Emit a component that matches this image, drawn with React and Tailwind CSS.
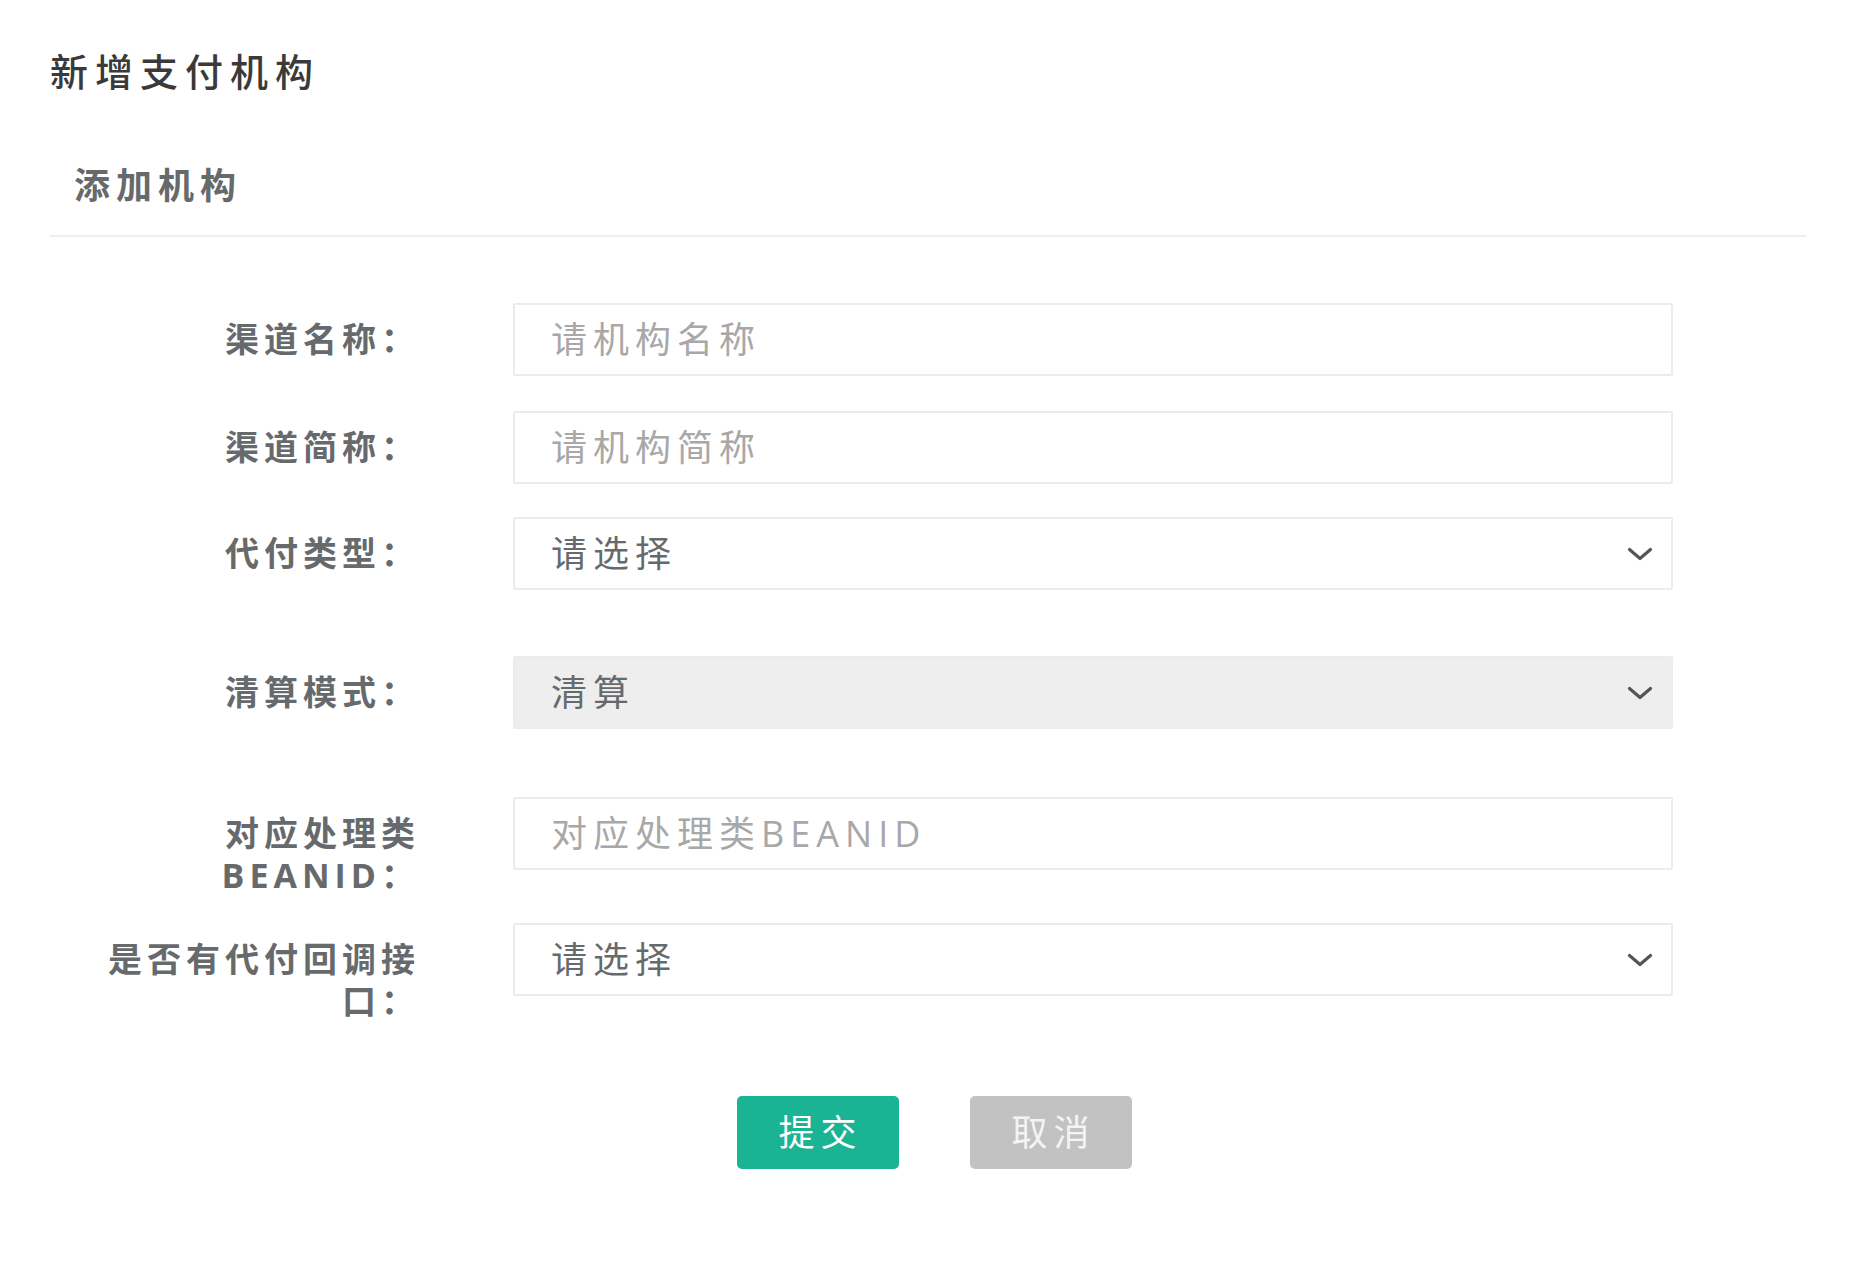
import React from 'react';

const Chevron = () => (
    <svg className="pointer-events-none absolute right-[20px] top-1/2 -translate-y-1/2" width="26" height="14" viewBox="0 0 26 14" fill="none">
        <path d="M2.5 2.5 L13 11.5 L23.5 2.5" stroke="#555" strokeWidth="3.2" strokeLinecap="round" strokeLinejoin="round" />
    </svg>
);

const Field = ({ label, children, className = '' }) => (
    <div className={`flex items-start ${className}`}>
        <label className="w-[370px] shrink-0 pt-[15px] text-right text-[34px] font-bold leading-[42px] tracking-[5px] text-[#676a6c]">
            {label}
        </label>
        <div className="relative ml-[93px] w-[1160px]">{children}</div>
    </div>
);

const inputCls =
    "h-[73px] w-full rounded-[2px] border-2 border-[#ececec] bg-white pl-[36px] pr-4 text-[36px] tracking-[6px] text-[#676a6c] outline-none placeholder:text-[#a8a8a8]";

const selectCls =
    "h-[73px] w-full appearance-none rounded-[2px] border-2 border-[#ececec] pl-[36px] pr-16 text-[36px] tracking-[6px] text-[#676a6c] outline-none";

export default function App() {
    return (
        <div className="min-h-screen bg-white pl-[50px] pr-[50px] pt-[47px] font-['Open_Sans','Noto_Sans_CJK_SC',sans-serif]">
            <h5 className="text-[38px] font-medium leading-[48px] tracking-[7px] text-[#3a3a3a]">新增支付机构</h5>

            <div className="mt-[67px] border-b-2 border-[#eeeeee] pb-[25px] pl-[24px]">
                <h4 className="text-[36px] font-bold leading-[48px] tracking-[6px] text-[#676a6c]">添加机构</h4>
            </div>

            <form className="mt-[66px]" onSubmit={(e) => e.preventDefault()}>
                <Field label="渠道名称：" className="mb-[35px]">
                    <input className={inputCls} placeholder="请机构名称" type="text" />
                </Field>
                <Field label="渠道简称：" className="mb-[33px]">
                    <input className={inputCls} placeholder="请机构简称" type="text" />
                </Field>
                <Field label="代付类型：" className="mb-[66px]">
                    <select className={`${selectCls} bg-white`} defaultValue="">
                        <option value="">请选择</option>
                    </select>
                    <Chevron />
                </Field>
                <Field label="清算模式：" className="mb-[68px]">
                    <select className={`${selectCls} bg-[#eeeeee]`} defaultValue="1" disabled>
                        <option value="1">清算</option>
                    </select>
                    <Chevron />
                </Field>
                <Field label="对应处理类BEANID：" className="mb-[27px]">
                    <input className={inputCls} placeholder="对应处理类BEANID" type="text" />
                </Field>
                <Field label="是否有代付回调接口：">
                    <select className={`${selectCls} bg-white`} defaultValue="">
                        <option value="">请选择</option>
                    </select>
                    <Chevron />
                </Field>

                <div className="mt-[74px] flex justify-center gap-[71px] pl-[12px]">
                    <button type="submit" className="h-[73px] w-[162px] rounded-[5px] bg-[#1ab394] pl-[6px] text-[36px] tracking-[6px] text-white">
                        提交
                    </button>
                    <button type="button" className="h-[73px] w-[162px] rounded-[5px] bg-[#c2c2c2] pl-[6px] text-[36px] tracking-[6px] text-[#f4f4f4]">
                        取消
                    </button>
                </div>
            </form>
        </div>
    );
}
